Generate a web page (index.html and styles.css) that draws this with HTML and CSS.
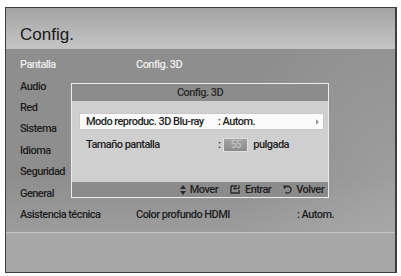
FILE: index.html
```html
<!DOCTYPE html>
<html>
<head>
  <meta charset="UTF-8">
  <title>Config.</title>
  <link rel="stylesheet" href="styles.css">
</head>
<body>
  <div class="screen">
    <div class="screen-header">
      <h1>Config.</h1>
    </div>

    <div class="screen-body">
      <!-- Main settings menu -->
      <div class="menu-list">
        <div class="menu-row active">
          <span class="menu-label">Pantalla</span>
          <span class="menu-item">Config. 3D</span>
          <span class="menu-value"></span>
        </div>
        <div class="menu-row"><span class="menu-label">Audio</span></div>
        <div class="menu-row"><span class="menu-label">Red</span></div>
        <div class="menu-row"><span class="menu-label">Sistema</span></div>
        <div class="menu-row"><span class="menu-label">Idioma</span></div>
        <div class="menu-row"><span class="menu-label">Seguridad</span></div>
        <div class="menu-row"><span class="menu-label">General</span></div>
        <div class="menu-row">
          <span class="menu-label">Asistencia técnica</span>
          <span class="menu-item">Color profundo HDMI</span>
          <span class="menu-value">: Autom.</span>
        </div>
      </div>

      <!-- Popup dialog over the menu -->
      <div class="dialog">
        <div class="dialog-title">Config. 3D</div>
        <div class="dialog-content">
          <div class="option selected">
            <span class="option-label">Modo reproduc. 3D Blu-ray</span>
            <span class="option-value">: Autom.</span>
            <span class="option-arrow"></span>
          </div>
          <div class="option">
            <span class="option-label">Tamaño pantalla</span>
            <span class="option-value">: <span class="number-box">55</span> pulgada</span>
          </div>
        </div>
        <div class="dialog-footer">
          <span class="hint">
            <svg width="6" height="10" viewBox="0 0 6 10"><path d="M3 0 L6 4 L0 4 Z M0 6 L6 6 L3 10 Z" fill="#2a2a2a"/></svg>
            Mover
          </span>
          <span class="hint">
            <svg width="11" height="9" viewBox="0 0 11 9"><path d="M1 1 H7 M1 1 V8 H9 V5" fill="none" stroke="#2a2a2a" stroke-width="1.4"/><path d="M9 0 V3.5 H4" fill="none" stroke="#2a2a2a" stroke-width="1.2"/><path d="M3 3.5 L5.5 1.5 V5.5 Z" fill="#2a2a2a"/></svg>
            Entrar
          </span>
          <span class="hint">
            <svg width="9" height="9" viewBox="0 0 9 9"><path d="M2 2.6 A3.4 3.4 0 1 1 2.4 7.2" fill="none" stroke="#2a2a2a" stroke-width="1.4"/><path d="M0 0.6 L4.2 0.8 L1.2 4.2 Z" fill="#2a2a2a"/></svg>
            Volver
          </span>
        </div>
      </div>
    </div>

    <div class="screen-footer"></div>
  </div>
</body>
</html>
```

FILE: styles.css
```css
body {
  margin: 0;
  background-color: white;
  font-family: Roboto, 'Liberation Sans', sans-serif;
  font-weight: 500;
  letter-spacing: -0.55px;
  color: #1f1f1f;
}
.screen {
  margin: 7px 4px 0 5px;
  width: 392px;
  height: 266px;
  box-sizing: border-box;
  border: 1px solid #3e3e3e;
  border-right-width: 2px;
  display: flex;
  flex-direction: column;
  background-color: #8f8f8f;
}
.screen-header {
  height: 41px;
  background: linear-gradient(#a3a3a3, #c5c5c5);
  display: flex;
  align-items: flex-end;
  padding-left: 14px;
}
h1 {
  margin: 0 0 4px 0;
  font-family: 'Liberation Sans', sans-serif;
  font-weight: normal;
  font-size: 17px;
  letter-spacing: 0;
  color: #1a1a1a;
}
.screen-body {
  position: relative;
  height: 183px;
  background:
    radial-gradient(ellipse 160px 200px at 100% 75%, rgba(255,255,255,0.14), rgba(255,255,255,0)),
    linear-gradient(#8e8e8e, #8e8e8e 70%, #9c9c9c);
}
.screen-footer {
  flex: 1;
  border-top: 1px solid #c6c6c6;
  background-color: #a7a7a7;
}
.menu-list {
  padding-top: 5px;
  display: flex;
  flex-direction: column;
}
.menu-row {
  height: 21.4px;
  display: grid;
  grid-template-columns: 116px 161px 1fr;
  align-items: center;
  padding-left: 14px;
  font-size: 11px;
}
.menu-row.active {
  color: #ececec;
}
.dialog {
  position: absolute;
  left: 65px;
  top: 34px;
  width: 258px;
  height: 115px;
  box-sizing: border-box;
  border: 1px solid #ececec;
  background-color: #cfcfcf;
  display: flex;
  flex-direction: column;
  font-size: 11px;
}
.dialog-title {
  height: 17px;
  line-height: 17px;
  text-align: center;
  background-color: #8c8c8c;
  color: #2a2a2a;
}
.dialog-content {
  flex: 1;
  padding: 13px 5px 0 8px;
  display: flex;
  flex-direction: column;
}
.option {
  height: 15px;
  display: flex;
  align-items: center;
  padding-left: 6px;
  margin-bottom: 8px;
}
.option.selected {
  background-color: #fbfbfb;
  box-shadow: 0 0 1px rgba(0,0,0,0.2);
}
.option-label {
  width: 132px;
}
.option-value {
  flex: 1;
  display: flex;
  align-items: center;
  gap: 3px;
}
.option-arrow {
  width: 0;
  height: 0;
  margin-right: 4px;
  border-left: 3px solid #9a9a9a;
  border-top: 3px solid transparent;
  border-bottom: 3px solid transparent;
}
.number-box {
  display: inline-block;
  width: 23px;
  height: 12px;
  line-height: 12px;
  text-align: center;
  margin-right: 2px;
  font-size: 10px;
  color: #c4c4c4;
  background: linear-gradient(#a2a2a2, #8c8c8c);
  border: 1px solid #e0e0e0;
}
.dialog-footer {
  height: 15px;
  background-color: #8b8b8b;
  display: flex;
  justify-content: flex-end;
  align-items: center;
  gap: 12px;
  padding-right: 4px;
  color: #222;
}
.hint {
  display: flex;
  align-items: center;
  gap: 4px;
}
```
